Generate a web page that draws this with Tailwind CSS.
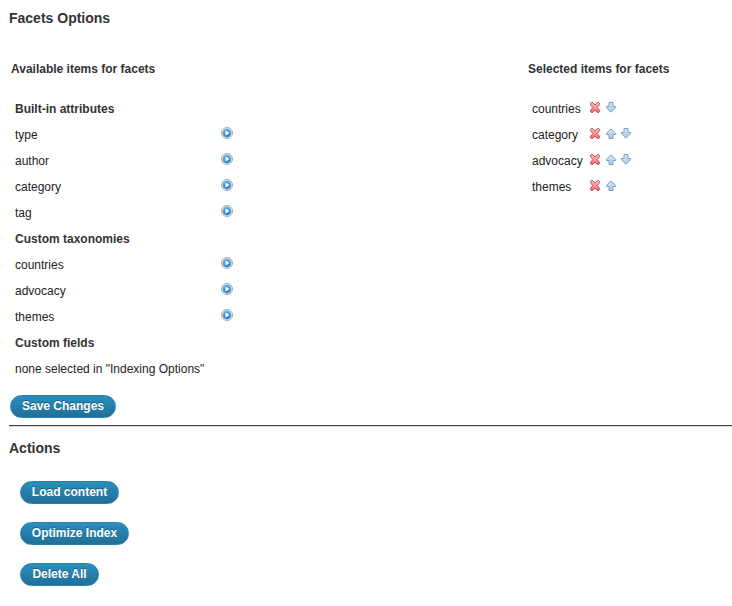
<!DOCTYPE html>
<html lang="en">
<head>
<meta charset="utf-8">
<title>Facets Options</title>
<script src="https://cdn.jsdelivr.net/npm/@tailwindcss/browser@4"></script>
</head>
<body class="bg-white text-[#333] text-[12px] leading-[26px] font-['Liberation_Sans',Arial,sans-serif] overflow-hidden">
<svg class="absolute w-0 h-0">
  <linearGradient id="gb" x1="0" y1="0" x2="0" y2="1"><stop offset="0" stop-color="#5fb4ee"/><stop offset="1" stop-color="#2a80d0"/></linearGradient>
  <linearGradient id="gr" x1="0" y1="0" x2="0" y2="1"><stop offset="0" stop-color="#fac4c4"/><stop offset="1" stop-color="#ee6a6e"/></linearGradient>
  <linearGradient id="ga" x1="0" y1="0" x2="0" y2="1"><stop offset="0" stop-color="#d5e7f6"/><stop offset="1" stop-color="#a9cbe8"/></linearGradient>
  <symbol id="play" viewBox="0 0 12 12"><circle cx="6" cy="6" r="5.5" fill="#f4f4f4" stroke="#a8a8a8"/><circle cx="6" cy="6" r="4.4" fill="url(#gb)"/><path d="M4.5 3.6 8.5 6 4.5 8.4Z" fill="#fff"/></symbol>
  <symbol id="del" viewBox="0 0 11 11"><path d="M.6 1.2 1.2.6H2.8L5 3.1 7.2.6H8.8L9.4 1.2V2.8L7.2 5.5 9.4 8.2V9.8L8.8 10.4H7.2L5 7.9 2.8 10.4H1.2L.6 9.8V8.2L2.8 5.5.6 2.8Z" fill="url(#gr)" stroke="#cc4a4f" stroke-linejoin="round"/></symbol>
  <symbol id="up" viewBox="0 0 11 11"><path d="M5 .8 9.6 5.4V6.5H7V10.5H3V6.5H.4V5.4Z" fill="url(#ga)" stroke="#7c9fbf"/></symbol>
  <symbol id="down" viewBox="0 0 11 11"><path d="M5 10.2 9.6 5.6V4.5H7V.5H3V4.5H.4V5.6Z" fill="url(#ga)" stroke="#7c9fbf"/></symbol>
</svg>
<main class="w-[732px] h-[606px] pl-[9px] pt-[5px]">
  <h3 class="text-[14px] font-bold">Facets Options</h3>
  <div class="flex pt-[25px] pl-[2px] h-[364px]">
    <section class="w-[517px]">
      <h4 class="font-bold">Available items for facets</h4>
      <ul class="pt-[14px] pl-[4px] w-[222px] text-[#222]">
        <li class="h-[26px] font-bold text-[#333]">Built-in attributes</li>
        <li class="h-[26px] flex justify-between"><span>type</span><svg class="w-3 h-3 mt-[5px]"><use href="#play"/></svg></li>
        <li class="h-[26px] flex justify-between"><span>author</span><svg class="w-3 h-3 mt-[5px]"><use href="#play"/></svg></li>
        <li class="h-[26px] flex justify-between"><span>category</span><svg class="w-3 h-3 mt-[5px]"><use href="#play"/></svg></li>
        <li class="h-[26px] flex justify-between"><span>tag</span><svg class="w-3 h-3 mt-[5px]"><use href="#play"/></svg></li>
        <li class="h-[26px] font-bold text-[#333]">Custom taxonomies</li>
        <li class="h-[26px] flex justify-between"><span>countries</span><svg class="w-3 h-3 mt-[5px]"><use href="#play"/></svg></li>
        <li class="h-[26px] flex justify-between"><span>advocacy</span><svg class="w-3 h-3 mt-[5px]"><use href="#play"/></svg></li>
        <li class="h-[26px] flex justify-between"><span>themes</span><svg class="w-3 h-3 mt-[5px]"><use href="#play"/></svg></li>
        <li class="h-[26px] font-bold text-[#333]">Custom fields</li>
        <li class="h-[26px] whitespace-nowrap">none selected in "Indexing Options"</li>
      </ul>
    </section>
    <section>
      <h4 class="font-bold">Selected items for facets</h4>
      <ul class="pt-[14px] pl-[4px] text-[#222]">
        <li class="h-[26px] flex"><span class="w-[58px]">countries</span><svg class="w-[11px] h-[11px] mt-[6px] mr-[5px]"><use href="#del"/></svg><svg class="w-[11px] h-[11px] mt-[6px]"><use href="#down"/></svg></li>
        <li class="h-[26px] flex"><span class="w-[58px]">category</span><svg class="w-[11px] h-[11px] mt-[6px] mr-[5px]"><use href="#del"/></svg><svg class="w-[11px] h-[11px] mt-[6px] mr-[4px]"><use href="#up"/></svg><svg class="w-[11px] h-[11px] mt-[6px]"><use href="#down"/></svg></li>
        <li class="h-[26px] flex"><span class="w-[58px]">advocacy</span><svg class="w-[11px] h-[11px] mt-[6px] mr-[5px]"><use href="#del"/></svg><svg class="w-[11px] h-[11px] mt-[6px] mr-[4px]"><use href="#up"/></svg><svg class="w-[11px] h-[11px] mt-[6px]"><use href="#down"/></svg></li>
        <li class="h-[26px] flex"><span class="w-[58px]">themes</span><svg class="w-[11px] h-[11px] mt-[6px] mr-[5px]"><use href="#del"/></svg><svg class="w-[11px] h-[11px] mt-[6px]"><use href="#up"/></svg></li>
      </ul>
    </section>
  </div>
  <button class="block ml-[1px] w-[106px] h-[23px] pb-[1px] rounded-full border border-[#2582ae] bg-linear-to-b from-[#2a8fbf] to-[#216f96] text-white font-bold leading-[20px] text-shadow-[0_-1px_0_rgb(0_0_0/0.3)] whitespace-nowrap">Save Changes</button>
  <div class="mt-[7px] h-[2px] border-t border-[#444] bg-[#ddd]"></div>
  <h3 class="text-[14px] font-bold mt-[8px]">Actions</h3>
  <div class="flex flex-col gap-[18px] pl-[11px] pt-[20px]">
    <button class="w-[99px] h-[23px] pb-[1px] rounded-full border border-[#2582ae] bg-linear-to-b from-[#2a8fbf] to-[#216f96] text-white font-bold leading-[20px] text-shadow-[0_-1px_0_rgb(0_0_0/0.3)] whitespace-nowrap">Load content</button>
    <button class="w-[109px] h-[23px] pb-[1px] rounded-full border border-[#2582ae] bg-linear-to-b from-[#2a8fbf] to-[#216f96] text-white font-bold leading-[20px] text-shadow-[0_-1px_0_rgb(0_0_0/0.3)] whitespace-nowrap">Optimize Index</button>
    <button class="w-[79px] h-[23px] pb-[1px] rounded-full border border-[#2582ae] bg-linear-to-b from-[#2a8fbf] to-[#216f96] text-white font-bold leading-[20px] text-shadow-[0_-1px_0_rgb(0_0_0/0.3)] whitespace-nowrap">Delete All</button>
  </div>
</main>
</body>
</html>
